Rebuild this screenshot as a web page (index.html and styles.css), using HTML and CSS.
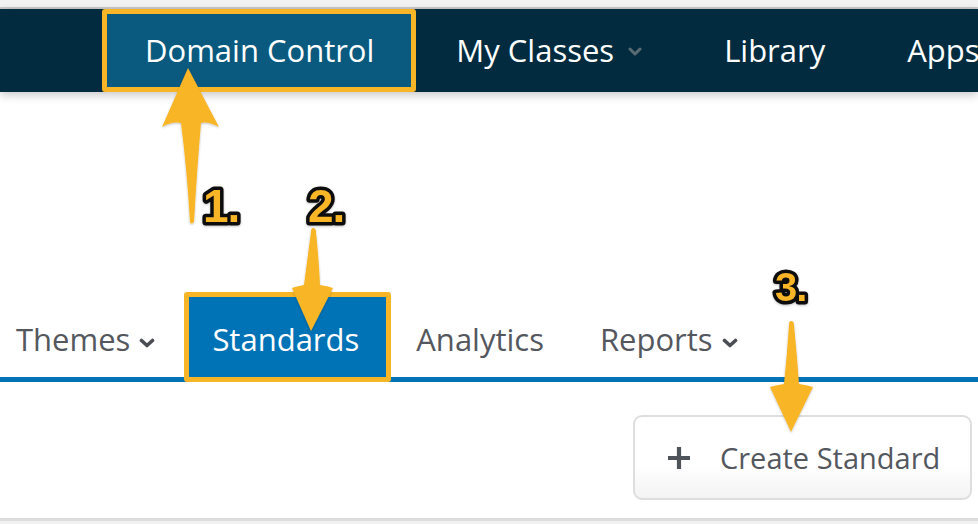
FILE: index.html
```html
<!DOCTYPE html>
<html lang="en">
<head>
<meta charset="utf-8">
<title>Domain Control - Standards</title>
<link rel="stylesheet" href="styles.css">
</head>
<body>
<div class="page">
  <div class="topstrip"></div>
  <nav class="nav">
    <a class="nav-item is-active">Domain Control</a>
    <a class="nav-item">My Classes<svg class="nav-caret" width="14" height="9" viewBox="0 0 14 9"><path d="M2 2 L7 7 L12 2" fill="none" stroke="currentColor" stroke-width="3" stroke-linecap="round" stroke-linejoin="round"/></svg></a>
    <a class="nav-item">Library</a>
    <a class="nav-item">Apps</a>
  </nav>
  <main class="content">
    <div class="tabs">
      <a class="tab tab-first">Themes<svg class="tab-caret" width="16" height="10" viewBox="0 0 16 10"><path d="M2.5 2.5 L8 7.5 L13.5 2.5" fill="none" stroke="currentColor" stroke-width="3.6" stroke-linecap="round" stroke-linejoin="round"/></svg></a>
      <a class="tab is-active">Standards</a>
      <a class="tab">Analytics</a>
      <a class="tab">Reports<svg class="tab-caret" width="16" height="10" viewBox="0 0 16 10"><path d="M2.5 2.5 L8 7.5 L13.5 2.5" fill="none" stroke="currentColor" stroke-width="3.6" stroke-linecap="round" stroke-linejoin="round"/></svg></a>
    </div>
    <div class="toolbar">
      <button class="btn-create" type="button"><svg class="plus" width="24" height="24" viewBox="0 0 24 24"><path d="M12 1 V23 M1 12 H23" stroke="currentColor" stroke-width="4.2"/></svg><span>Create Standard</span></button>
    </div>
  </main>
  <div class="footer-line"></div>

  <svg class="annotations" width="978" height="524" viewBox="0 0 978 524">
    <defs>
      <filter id="sh" x="-20%" y="-20%" width="140%" height="140%">
        <feDropShadow dx="0" dy="1" stdDeviation="1" flood-color="#000" flood-opacity="0.25"/>
      </filter>
    </defs>
    <g fill="#f8b527" filter="url(#sh)">
      <path d="M188 68 L219 127 Q208 121 201 123 Q197 170 194 222 Q191 225 190 222 Q187 170 181 123 Q172 121 162 127 Z"/>
      <path d="M313 228 Q316 228 316 232 Q319 262 320 285 Q327 286 333 288 L311 331 L292 288 Q298 286 304 285 Q307 262 311 232 Q311 228 313 228 Z"/>
      <path d="M791 321 Q794 321 794 325 Q797 355 799 384 Q806 385 813 387 L791 432 L770 387 Q777 385 784 384 Q787 355 789 325 Q789 321 791 321 Z"/>
    </g>
    <g class="num" filter="url(#sh)">
      <text x="203" y="222" font-size="46">1.</text>
      <text x="308" y="222" font-size="46">2.</text>
      <text x="775" y="301" font-size="40">3.</text>
    </g>
  </svg>
</div>
</body>
</html>
```

FILE: styles.css
```css
* { box-sizing: border-box; }

html, body {
  margin: 0;
  padding: 0;
  background: #ffffff;
}

body {
  font-family: "Open Sans", "Noto Sans", sans-serif;
  overflow: hidden;
}

.page {
  position: relative;
  width: 978px;
  height: 524px;
  overflow: hidden;
  display: flex;
  flex-direction: column;
}

.topstrip {
  height: 9px;
  background: #f2f2f2;
  border-bottom: 2px solid #c9c9c9;
  flex: none;
}

.nav {
  position: relative;
  z-index: 1;
  flex: none;
  height: 83px;
  background: #022b40;
  display: flex;
  align-items: stretch;
  padding-left: 102px;
  white-space: nowrap;
  overflow: hidden;
  box-shadow: 0 3px 9px rgba(0, 0, 0, 0.22);
}

.nav-item {
  display: flex;
  align-items: center;
  border: 5px solid transparent;
  border-radius: 3px;
  padding: 0 37px 0 35px;
  font-size: 31px;
  line-height: 73px;
  color: #ffffff;
  text-decoration: none;
  flex: none;
}

.nav-item.is-active {
  background: #095a7e;
  border-color: #f8b527;
  padding-left: 38px;
}

.nav-caret {
  color: #5b6b74;
  margin-left: 14px;
  margin-right: 0;
  margin-top: 2px;
}

.content {
  flex: 1;
  display: flex;
  flex-direction: column;
  padding-top: 200px;
}

.tabs {
  display: flex;
  align-items: flex-start;
  padding-left: 16px;
  border-bottom: 5px solid #0072b6;
  height: 90px;
}

.tab {
  position: relative;
  z-index: 1;
  display: flex;
  align-items: center;
  height: 90px;
  margin-bottom: -5px;
  border: 5px solid transparent;
  border-radius: 3px;
  padding: 5px 23px 0 23px;
  font-size: 31px;
  line-height: 75px;
  color: #54585e;
  text-decoration: none;
  white-space: nowrap;
  flex: none;
}

.tab-first {
  padding-left: 0;
  border-left-width: 0;
  padding-right: 24px;
}

.tab.is-active {
  background: #0072b6;
  border-color: #f8b527;
  color: #ffffff;
  padding-right: 27px;
}

.tab.is-active + .tab {
  padding-left: 20px;
}

.tab-caret {
  color: #4a4e54;
  margin-left: 9px;
  margin-top: 6px;
}

.toolbar {
  display: flex;
  justify-content: flex-end;
  padding: 33px 6px 0 0;
}

.btn-create {
  display: flex;
  align-items: center;
  height: 85px;
  width: 339px;
  padding: 0 0 0 32px;
  border: 2px solid #dedede;
  border-radius: 9px;
  background: linear-gradient(to bottom, #ffffff 0%, #ffffff 60%, #f3f3f3 100%);
  font-family: "Open Sans", "Noto Sans", sans-serif;
  font-size: 29px;
  color: #54585e;
  cursor: pointer;
}

.plus {
  color: #4f535a;
  margin-right: 29px;
  flex: none;
}

.footer-line {
  flex: none;
  height: 6px;
  border-top: 3px solid #dddddd;
  background: #f1f1f1;
}

.annotations {
  position: absolute;
  left: 0;
  top: 0;
  pointer-events: none;
  z-index: 5;
}

.num text {
  font-family: "Liberation Sans", Arial, sans-serif;
  font-weight: 700;
  fill: #f8b527;
  stroke: #0a0a0a;
  stroke-width: 7px;
  stroke-linejoin: round;
  paint-order: stroke fill;
  letter-spacing: -1px;
}
```
